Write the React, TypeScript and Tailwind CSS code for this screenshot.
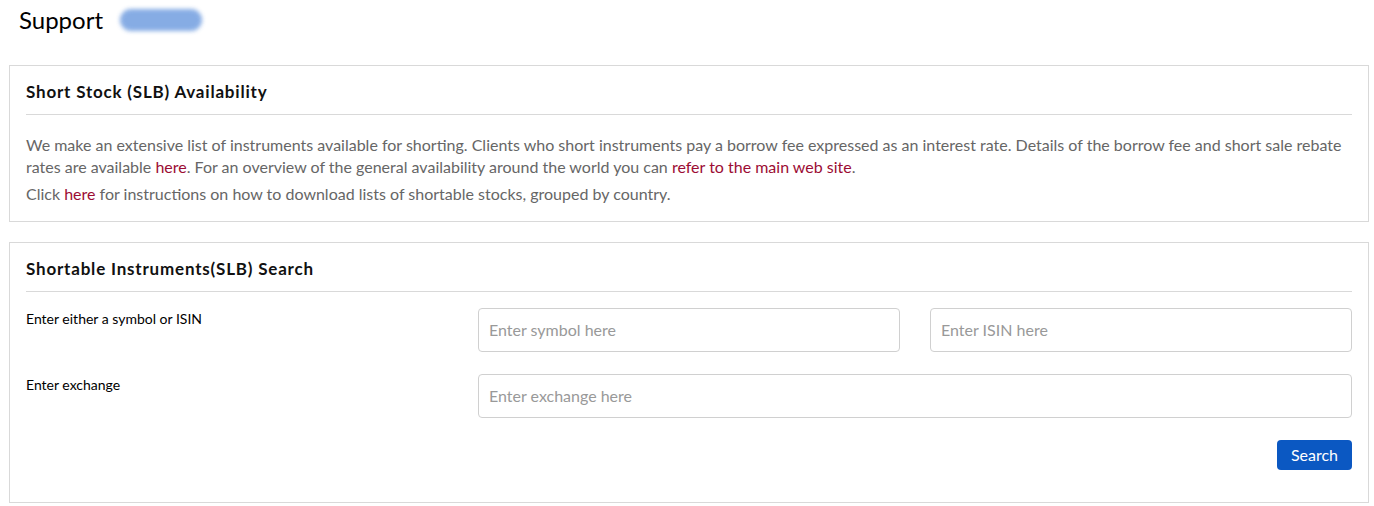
import React from 'react';

const font = { fontFamily: 'Lato, "Liberation Sans", Arial, sans-serif' };

function Card({ title, children, className = '' }: { title: string; children: React.ReactNode; className?: string }) {
  return (
    <section className={`border border-[#d9d9d9] bg-white px-4 pt-4 ${className}`}>
      <h2 className="text-[17px] leading-5 font-bold text-[#111] tracking-[0.8px]">{title}</h2>
      <div className="mt-3 h-px bg-[#d9d9d9]" />
      {children}
    </section>
  );
}

export default function App() {
  return (
    <div className="min-h-screen bg-white" style={font}>
      {/* page header */}
      <div className="flex items-center h-[40px] pl-[19px]">
        <h1 className="text-[24px] leading-none text-black">Support</h1>
        <span className="ml-[17px] h-[22px] w-[82px] rounded-full bg-[#7aa4e2] blur-[2px] opacity-90" />
      </div>

      <div className="pl-[9px] pt-[25px] pr-[5px] flex flex-col gap-[20px]">
        {/* availability */}
        <Card title="Short Stock (SLB) Availability" className="pb-4">
          <p className="mt-[19px] text-[16px] leading-[22px] text-[#666]">
            We make an extensive list of instruments available for shorting. Clients who short instruments pay a borrow fee expressed as an interest rate. Details of the borrow fee and short sale rebate rates are available{' '}
            <a href="#" className="text-[#9c0c34]">here</a>. For an overview of the general availability around the world you can{' '}
            <a href="#" className="text-[#9c0c34]">refer to the main web site</a>.
          </p>
          <p className="mt-[5px] text-[16px] leading-[22px] text-[#666]">
            Click <a href="#" className="text-[#9c0c34]">here</a> for instructions on how to download lists of shortable stocks, grouped by country.
          </p>
        </Card>

        {/* search */}
        <Card title="Shortable Instruments(SLB) Search" className="pb-[32px]">
          <div className="mt-4 grid grid-cols-3 gap-x-[30px] gap-y-[22px]">
            <label className="pt-[2px] text-[14px] leading-[18px] text-black">Enter either a symbol or ISIN</label>
            <input
              placeholder="Enter symbol here"
              className="h-[44px] rounded-[4px] border border-[#d0d0d0] px-[10px] pb-[2px] text-[16px] text-[#333] placeholder:text-[#999] outline-none"
            />
            <input
              placeholder="Enter ISIN here"
              className="h-[44px] rounded-[4px] border border-[#d0d0d0] px-[10px] pb-[2px] text-[16px] text-[#333] placeholder:text-[#999] outline-none"
            />
            <label className="pt-[2px] text-[14px] leading-[18px] text-black">Enter exchange</label>
            <input
              placeholder="Enter exchange here"
              className="col-span-2 h-[44px] rounded-[4px] border border-[#d0d0d0] px-[10px] pb-[2px] text-[16px] text-[#333] placeholder:text-[#999] outline-none"
            />
            <div className="col-span-3 flex justify-end">
              <button className="h-[30px] px-[14px] rounded-[4px] bg-[#0b58c2] text-white text-[16px] leading-none">Search</button>
            </div>
          </div>
        </Card>
      </div>
    </div>
  );
}
